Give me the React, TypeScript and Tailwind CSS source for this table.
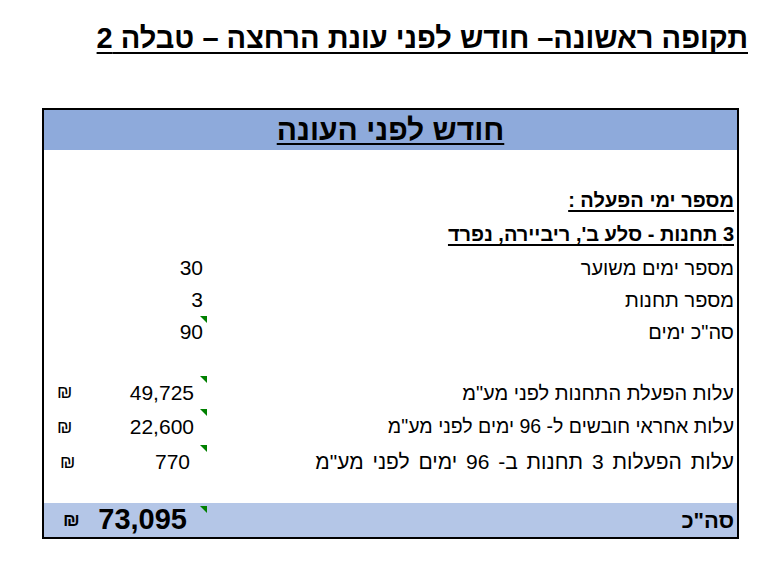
import React from 'react';

type RowProps = {
  h: string;
  label?: string;
  labelCls?: string;
  value?: string;
  valuePad?: string;
  shekel?: string;
  tri?: boolean;
};

function Tri() {
  return <span className="absolute top-0 right-0 w-0 h-0 border-t-[7px] border-l-[7px] border-t-[#008000] border-l-transparent" />;
}

function Row({ h, label, labelCls = 'text-[20px]', value, valuePad = 'pr-[4px]', shekel, tri }: RowProps) {
  return (
    <div className={`flex items-center ${h}`}>
      <div className={`w-[44px] h-full flex items-center text-[18px] ${shekel ?? 'pl-[13px]'}`}>
        {shekel !== undefined && '₪'}
      </div>
      <div className={`relative w-[119px] h-full flex items-center justify-end text-[21px] ${valuePad}`}>
        {value}
        {tri && <Tri />}
      </div>
      <div className="flex-1 h-full flex items-center justify-end pr-[3px]">
        {label && (
          <span dir="rtl" className={labelCls}>
            {label}
          </span>
        )}
      </div>
    </div>
  );
}

const boldLabel = 'text-[20px] font-bold underline decoration-[1.5px] underline-offset-[3px] [text-decoration-skip-ink:none]';

export default function App() {
  return (
    <div className="w-[780px] h-[574px] bg-white text-black font-['Liberation_Sans',Arial,sans-serif] overflow-hidden">
      <div className="flex justify-end pr-[32px] pt-[21px]">
        <h1 dir="rtl" className="text-[29px] leading-[35px] font-bold underline decoration-2 underline-offset-[4px] [text-decoration-skip-ink:none]">
          תקופה ראשונה– חודש לפני עונת הרחצה – טבלה 2
        </h1>
      </div>

      <div className="mt-[52px] ml-[42px] w-[697px] h-[431px] border-2 border-black flex flex-col">
        <div className="h-[40px] bg-[#8eaadb] flex items-center justify-center">
          <span dir="rtl" className="text-[30px] leading-[34px] font-bold underline decoration-2 underline-offset-[3px] [text-decoration-skip-ink:none]">
            חודש לפני העונה
          </span>
        </div>

        <Row h="h-[34px]" />
        <Row h="h-[32px]" label="מספר ימי הפעלה :" labelCls={boldLabel} />
        <Row h="h-[35px]" label="3 תחנות - סלע ב', ריביירה, נפרד" labelCls={boldLabel} />
        <Row h="h-[33px]" label="מספר ימים משוער" value="30" />
        <Row h="h-[32px]" label="מספר תחנות" value="3" />
        <Row h="h-[32px]" label={'סה"כ ימים'} value="90" tri />
        <Row h="h-[28px]" />
        <Row h="h-[33px]" label={'עלות הפעלת התחנות לפני מע"מ'} value="49,725" valuePad="pr-[13px]" shekel="pl-[13px]" tri />
        <Row h="h-[36px]" label={'עלות אחראי חובשים ל- 96 ימים לפני מע"מ'} labelCls="text-[19.5px]" value="22,600" valuePad="pr-[13px]" shekel="pl-[13px]" tri />
        <Row h="h-[34px]" label={'עלות הפעלות 3 תחנות ב- 96 ימים לפני מע"מ'} labelCls="text-[21px] [word-spacing:3px]" value="770" valuePad="pr-[17px]" shekel="pl-[16px]" tri />
        <div className="flex-1" />

        <div className="h-[34px] bg-[#b4c6e7] flex items-center">
          <div className="w-[44px] h-full flex items-center pl-[19px] text-[19px] font-bold">₪</div>
          <div className="relative w-[119px] h-full flex items-center justify-end pr-[20px] text-[29px] font-bold">
            73,095
            <span className="absolute top-[3px] right-0 w-0 h-0 border-t-[7px] border-l-[7px] border-t-[#008000] border-l-transparent" />
          </div>
          <div className="flex-1 h-full flex items-center justify-end pr-[3px]">
            <span dir="rtl" className="text-[22px] font-bold">סה"כ</span>
          </div>
        </div>
      </div>
    </div>
  );
}
